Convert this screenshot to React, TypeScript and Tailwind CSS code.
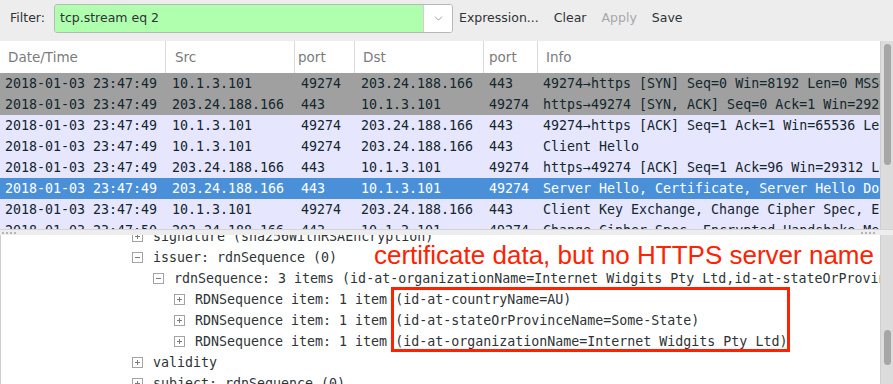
import React from 'react';
import { ChevronDown } from 'lucide-react';

type Packet = {
  time: string;
  src: string;
  sport: string;
  dst: string;
  dport: string;
  info: string;
  kind: 'syn' | 'tcp' | 'selected';
};

const packets: Packet[] = [
  { time: '2018-01-03 23:47:49', src: '10.1.3.101', sport: '49274', dst: '203.24.188.166', dport: '443', info: '49274→https [SYN] Seq=0 Win=8192 Len=0 MSS=1460 WS=256 SACK_PERM=1', kind: 'syn' },
  { time: '2018-01-03 23:47:49', src: '203.24.188.166', sport: '443', dst: '10.1.3.101', dport: '49274', info: 'https→49274 [SYN, ACK] Seq=0 Ack=1 Win=29200 Len=0 MSS=1460', kind: 'syn' },
  { time: '2018-01-03 23:47:49', src: '10.1.3.101', sport: '49274', dst: '203.24.188.166', dport: '443', info: '49274→https [ACK] Seq=1 Ack=1 Win=65536 Len=0', kind: 'tcp' },
  { time: '2018-01-03 23:47:49', src: '10.1.3.101', sport: '49274', dst: '203.24.188.166', dport: '443', info: 'Client Hello', kind: 'tcp' },
  { time: '2018-01-03 23:47:49', src: '203.24.188.166', sport: '443', dst: '10.1.3.101', dport: '49274', info: 'https→49274 [ACK] Seq=1 Ack=96 Win=29312 Len=0', kind: 'tcp' },
  { time: '2018-01-03 23:47:49', src: '203.24.188.166', sport: '443', dst: '10.1.3.101', dport: '49274', info: 'Server Hello, Certificate, Server Hello Done', kind: 'selected' },
  { time: '2018-01-03 23:47:49', src: '10.1.3.101', sport: '49274', dst: '203.24.188.166', dport: '443', info: 'Client Key Exchange, Change Cipher Spec, Encrypted Handshake Message', kind: 'tcp' },
  { time: '2018-01-03 23:47:50', src: '203.24.188.166', sport: '443', dst: '10.1.3.101', dport: '49274', info: 'Change Cipher Spec, Encrypted Handshake Message', kind: 'tcp' },
];

const rowColors: Record<Packet['kind'], string> = {
  syn: 'bg-[#a0a0a0] text-[#12272e]',
  tcp: 'bg-[#e7e6ff] text-[#12272e]',
  selected: 'bg-[#4a90d9] text-white',
};

type TreeLine = { level: number; open: boolean; text: string };

const tree: TreeLine[] = [
  { level: 0, open: false, text: 'signature (sha256WithRSAEncryption)' },
  { level: 0, open: true, text: 'issuer: rdnSequence (0)' },
  { level: 1, open: true, text: 'rdnSequence: 3 items (id-at-organizationName=Internet Widgits Pty Ltd,id-at-stateOrProvinceName=Some-State,id-at-countryName=AU)' },
  { level: 2, open: false, text: 'RDNSequence item: 1 item (id-at-countryName=AU)' },
  { level: 2, open: false, text: 'RDNSequence item: 1 item (id-at-stateOrProvinceName=Some-State)' },
  { level: 2, open: false, text: 'RDNSequence item: 1 item (id-at-organizationName=Internet Widgits Pty Ltd)' },
  { level: 0, open: false, text: 'validity' },
  { level: 0, open: false, text: 'subject: rdnSequence (0)' },
];

const indent = ['pl-[131px]', 'pl-[152px]', 'pl-[173px]'];

const Expander = ({ open }: { open: boolean }) => (
  <svg width="11" height="11" viewBox="0 0 11 11" className="shrink-0">
    <rect x="0.5" y="0.5" width="10" height="10" fill="white" stroke="#a3a3a3" />
    <line x1="3" y1="5.5" x2="8" y2="5.5" stroke="#7c7c7c" />
    {!open && <line x1="5.5" y1="3" x2="5.5" y2="8" stroke="#7c7c7c" />}
  </svg>
);

const Scrollbar = ({ thumbTop, thumbHeight }: { thumbTop: string; thumbHeight: string }) => (
  <div className="w-[13px] shrink-0 bg-[#dcdcdc] border-l border-[#cfcfcf] flex flex-col">
    <div className={`${thumbTop} ${thumbHeight} mx-auto w-[7px] rounded-full bg-[#a6a6a6]`} />
  </div>
);

export default function App() {
  const mono = "font-['DejaVu_Sans_Mono',monospace] text-[13.3px]";
  const sans = "font-['DejaVu_Sans',sans-serif]";

  return (
    <div className={`w-[893px] h-[384px] bg-[#ededed] flex flex-col overflow-hidden ${sans}`}>
      {/* Filter toolbar */}
      <div className="h-[41px] shrink-0 flex items-start pt-[4px] text-[12.5px] text-[#2e3436]">
        <span className="w-[54px] pl-[10px] h-[29px] flex items-center">Filter:</span>
        <div className="w-[399px] h-[29px] flex border border-[#b8b8b8] rounded-[3px] overflow-hidden">
          <div className="flex-1 bg-[#afffaf] flex items-center pl-[5px]">tcp.stream eq 2</div>
          <div className="w-[29px] bg-white border-l border-[#d0d0d0] flex items-center justify-center">
            <ChevronDown size={13} color="#8a8a8a" strokeWidth={1.5} />
          </div>
        </div>
        <div className="h-[29px] flex items-center gap-[15px] pl-[6px]">
          <span>Expression...</span>
          <span>Clear</span>
          <span className="text-[#a7a7a7]">Apply</span>
          <span>Save</span>
        </div>
      </div>

      {/* Packet list */}
      <div className="h-[188px] shrink-0 flex bg-white">
        <div className="flex-1 overflow-hidden">
          <div className="h-[32px] grid grid-cols-[166px_129px_60px_129px_54px_1fr] text-[13.5px] text-[#7b7b7b] bg-white">
            <div className="pl-[8px] flex items-center border-r border-[#dadada]">Date/Time</div>
            <div className="pl-[9px] flex items-center border-r border-[#dadada]">Src</div>
            <div className="pl-[3px] flex items-center border-r border-[#dadada]">port</div>
            <div className="pl-[8px] flex items-center border-r border-[#dadada]">Dst</div>
            <div className="pl-[5px] flex items-center border-r border-[#dadada]">port</div>
            <div className="pl-[8px] flex items-center">Info</div>
          </div>
          {packets.map((p, i) => (
            <div
              key={i}
              className={`h-[21px] grid grid-cols-[166px_129px_60px_129px_54px_1fr] items-center whitespace-nowrap ${mono} ${rowColors[p.kind]}`}
            >
              <div className="pl-[5px] overflow-hidden">{p.time}</div>
              <div className="pl-[6px] overflow-hidden">{p.src}</div>
              <div className="pl-[6px] overflow-hidden">{p.sport}</div>
              <div className="pl-[6px] overflow-hidden">{p.dst}</div>
              <div className="pl-[5px] overflow-hidden">{p.dport}</div>
              <div className="pl-[5px] overflow-hidden">{p.info}</div>
            </div>
          ))}
        </div>
        <Scrollbar thumbTop="mt-[3px]" thumbHeight="h-[121px]" />
      </div>

      {/* Splitter */}
      <div className="h-[6px] shrink-0 bg-[#ededed] border-t border-[#d4d4d4] flex items-center justify-between px-[2px]">
        <div className="flex gap-[2px]">
          {[0, 1, 2, 3].map(i => <div key={i} className="w-[2px] h-[2px] bg-[#b5b5b5]" />)}
        </div>
        <div className="flex gap-[2px] mr-[16px]">
          {[0, 1, 2, 3].map(i => <div key={i} className="w-[2px] h-[2px] bg-[#b5b5b5]" />)}
        </div>
      </div>

      {/* Packet details */}
      <div className="flex-1 flex bg-white border-l border-[#cfcfcf] relative">
        <div className="flex-1 overflow-hidden">
          <div className={`-mt-[9px] ${mono} text-[#2e3436]`}>
            {tree.map((t, i) => (
              <div key={i} className={`h-[21px] flex items-center gap-[10px] whitespace-nowrap ${indent[t.level]}`}>
                <Expander open={t.open} />
                <span>{t.text}</span>
              </div>
            ))}
          </div>
        </div>
        <Scrollbar thumbTop="mt-[95px]" thumbHeight="h-[35px]" />

        {/* Annotation */}
        <div className="absolute left-[373px] top-[7px] font-['Liberation_Sans',Arial,sans-serif] text-[26px] leading-none text-[#ff2200] whitespace-nowrap">
          certificate data, but no HTTPS server name
        </div>
        <div className="absolute left-[390px] top-[52px] w-[399px] h-[65px] border-[3px] border-[#ff2200]" />
      </div>
    </div>
  );
}
